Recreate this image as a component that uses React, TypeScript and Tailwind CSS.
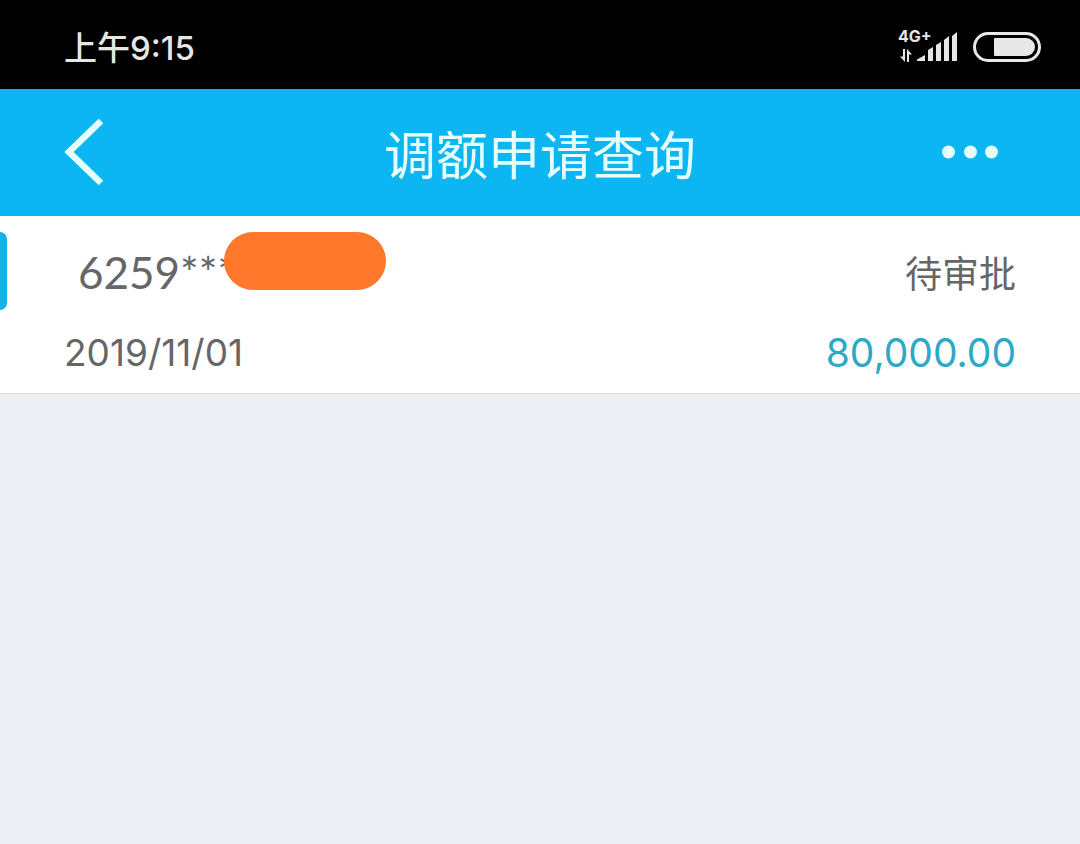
function SignalIcon() {
  return (
    <svg
      className="overflow-visible"
      width="62"
      height="48"
      viewBox="0 -6 62 48"
      fill="#e6e6e6"
      role="img"
      aria-label="4G+"
    >
      <text x="1" y="13" fontSize="16" fontWeight="700" fontFamily="'Inter', 'Noto Sans', sans-serif">
        4G+
      </text>
      <path d="M6 20h2v13L3 27.500h3zM10 33V20l5 5.500h-3V33z" />
      <path d="M20 32v-1.500l8-4.500v6zM31 32V21l5-3v14zM39 32V16l5-3v19zM47 32V11l5-4v25zM55 32V7l5-4v29z" />
    </svg>
  );
}

function BatteryIcon() {
  return (
    <svg width="68" height="30" viewBox="0 0 68 30" role="img" aria-label="电量">
      <rect x="1.5" y="1.5" width="65" height="27" rx="13.5" fill="none" stroke="#e8e8e8" strokeWidth="3" />
      <path d="M22 6h31a9 9 0 0 1 0 18H22a1 1 0 0 1-1-1V7a1 1 0 0 1 1-1z" fill="#e8e8e8" />
    </svg>
  );
}

function StatusBar() {
  return (
    <div className="flex h-[89px] items-center justify-between bg-black pt-1 pr-[39px] pl-16 text-[#e6e6e6]">
      <time className="pt-1 font-['Inter','Noto_Sans_CJK_SC',sans-serif] text-[33px] font-medium">上午9:15</time>
      <div className="flex items-center gap-3.5">
        <SignalIcon />
        <BatteryIcon />
      </div>
    </div>
  );
}

function Header() {
  return (
    <header className="grid h-[127px] grid-cols-[1fr_auto_1fr] items-center bg-[#0bb6f3] px-16 text-[#e6ffff]">
      <button type="button" aria-label="返回" className="justify-self-start">
        <svg width="40" height="68" viewBox="0 0 40 68" fill="none" stroke="currentColor" strokeWidth="6.5">
          <path d="M37 2 5 33l32 31" />
        </svg>
      </button>
      <h1 className="text-[52px] leading-none">调额申请查询</h1>
      <button type="button" aria-label="更多" className="justify-self-end">
        <svg width="76" height="40" viewBox="0 0 76 40" fill="currentColor">
          <circle cx="8.500" cy="19" r="6.5" />
          <circle cx="30.500" cy="19" r="6.5" />
          <circle cx="51.500" cy="19" r="6.5" />
        </svg>
      </button>
    </header>
  );
}

function RequestItem() {
  return (
    <article className="relative border-b border-[#d8dadc] bg-white pt-6 pr-16 pb-3 pl-16 text-[#666666]">
      <span className="absolute top-4 left-0 h-[78px] w-[7px] rounded-r-xl bg-[#12b1e8]" />
      <div className="flex h-16 items-center justify-between">
        <div className="relative pl-3.5">
          <span className="font-['Lato',sans-serif] text-[44px] leading-none">6259***</span>
          <span className="absolute -top-[18px] left-40 h-[58px] w-[162px] rounded-full bg-[#ff782c]" />
        </div>
        <span className="text-[37px] leading-none">待审批</span>
      </div>
      <div className="flex h-[77px] items-center justify-between pt-5 font-['Inter',sans-serif] leading-none">
        <time className="text-[37px]">2019/11/01</time>
        <span className="text-[39px] text-[#2ba9c6]">80,000.00</span>
      </div>
    </article>
  );
}

export default function App() {
  return (
    <div className="min-h-screen bg-[#ecf0f4] font-['Noto_Sans_CJK_SC',sans-serif]">
      <StatusBar />
      <Header />
      <main>
        <RequestItem />
      </main>
    </div>
  );
}
